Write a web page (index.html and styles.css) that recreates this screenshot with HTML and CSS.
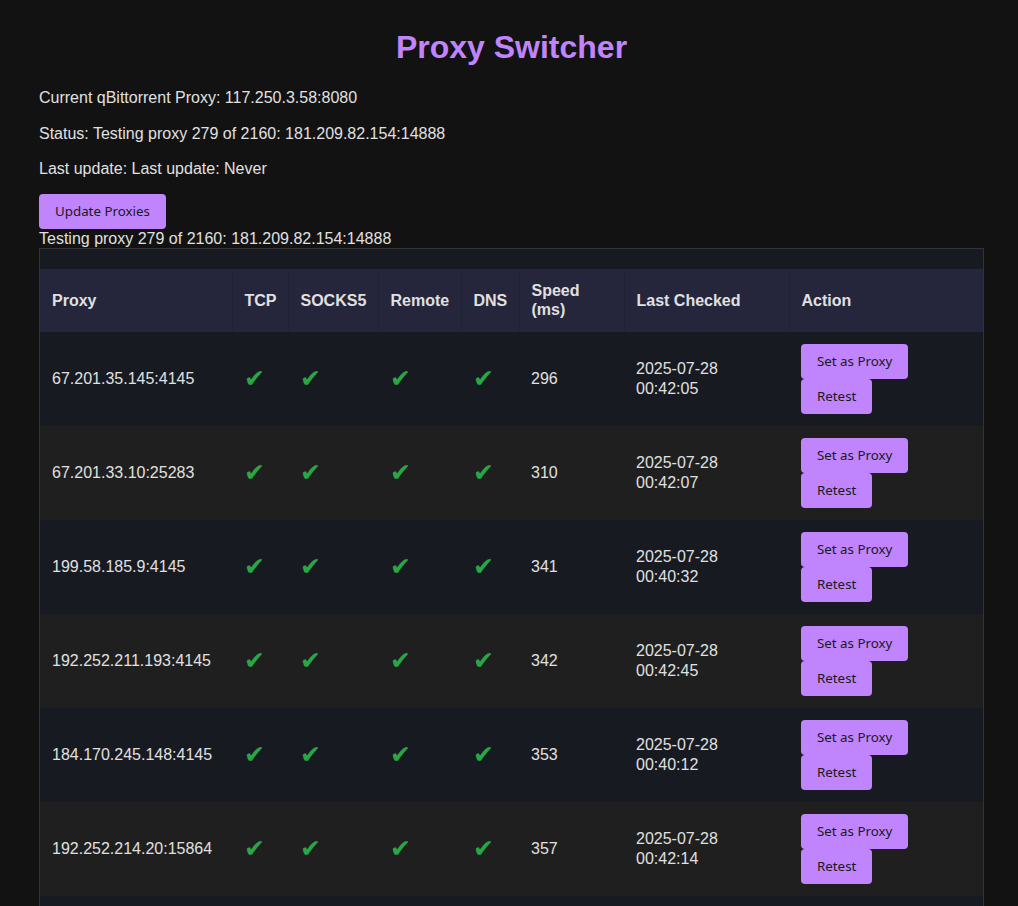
FILE: index.html
```html
<!DOCTYPE html>
<html lang="en">
<head>
<meta charset="utf-8">
<title>Proxy Switcher</title>
<link rel="stylesheet" href="styles.css">
</head>
<body>
<div class="page">
  <h1 class="title">Proxy Switcher</h1>
  <p class="info">Current qBittorrent Proxy: 117.250.3.58:8080</p>
  <p class="info">Status: Testing proxy 279 of 2160: 181.209.82.154:14888</p>
  <p class="info">Last update: Last update: Never</p>
  <button class="btn">Update Proxies</button>
  <div class="progress">Testing proxy 279 of 2160: 181.209.82.154:14888</div>
  <div class="table-wrap">
    <table class="proxies">
      <colgroup>
        <col class="c-proxy"><col class="c-tcp"><col class="c-socks"><col class="c-remote"><col class="c-dns"><col class="c-speed"><col class="c-checked"><col class="c-action">
      </colgroup>
      <thead>
        <tr><th>Proxy</th><th>TCP</th><th>SOCKS5</th><th>Remote</th><th>DNS</th><th>Speed (ms)</th><th>Last Checked</th><th>Action</th></tr>
      </thead>
      <tbody>
        <tr><td>67.201.35.145:4145</td><td class="ok">✔</td><td class="ok">✔</td><td class="ok">✔</td><td class="ok">✔</td><td>296</td><td>2025-07-28 00:42:05</td><td><div class="actions"><button class="btn">Set as Proxy</button><button class="btn">Retest</button></div></td></tr>
        <tr><td>67.201.33.10:25283</td><td class="ok">✔</td><td class="ok">✔</td><td class="ok">✔</td><td class="ok">✔</td><td>310</td><td>2025-07-28 00:42:07</td><td><div class="actions"><button class="btn">Set as Proxy</button><button class="btn">Retest</button></div></td></tr>
        <tr><td>199.58.185.9:4145</td><td class="ok">✔</td><td class="ok">✔</td><td class="ok">✔</td><td class="ok">✔</td><td>341</td><td>2025-07-28 00:40:32</td><td><div class="actions"><button class="btn">Set as Proxy</button><button class="btn">Retest</button></div></td></tr>
        <tr><td>192.252.211.193:4145</td><td class="ok">✔</td><td class="ok">✔</td><td class="ok">✔</td><td class="ok">✔</td><td>342</td><td>2025-07-28 00:42:45</td><td><div class="actions"><button class="btn">Set as Proxy</button><button class="btn">Retest</button></div></td></tr>
        <tr><td>184.170.245.148:4145</td><td class="ok">✔</td><td class="ok">✔</td><td class="ok">✔</td><td class="ok">✔</td><td>353</td><td>2025-07-28 00:40:12</td><td><div class="actions"><button class="btn">Set as Proxy</button><button class="btn">Retest</button></div></td></tr>
        <tr><td>192.252.214.20:15864</td><td class="ok">✔</td><td class="ok">✔</td><td class="ok">✔</td><td class="ok">✔</td><td>357</td><td>2025-07-28 00:42:14</td><td><div class="actions"><button class="btn">Set as Proxy</button><button class="btn">Retest</button></div></td></tr>
        <tr><td>72.195.34.59:4145</td><td class="ok">✔</td><td class="ok">✔</td><td class="ok">✔</td><td class="ok">✔</td><td>362</td><td>2025-07-28 00:41:58</td><td><div class="actions"><button class="btn">Set as Proxy</button><button class="btn">Retest</button></div></td></tr>
      </tbody>
    </table>
  </div>
</div>
</body>
</html>
```

FILE: styles.css
```css
html, body {
  background: #121212;
}
body {
  margin: 8px 0 0 0;
  color: #e0e0e0;
  font-family: "Liberation Sans", Arial, sans-serif;
  font-size: 16px;
  line-height: 1.2;
}
.page {
  padding: 0 34px 0 39px;
}
.title {
  text-align: center;
  color: #c084fc;
  font-size: 32px;
  font-weight: bold;
  line-height: 37px;
  margin: 21.44px 0 22px;
}
.info {
  margin: 16px 0;
}
.info:first-of-type {
  margin-top: 22px;
}
.btn {
  font-family: "Noto Sans", "Open Sans", sans-serif;
  font-size: 13.333px;
  line-height: 19px;
  background: #c084fc;
  color: #1a1a1a;
  border: none;
  border-radius: 4px;
  padding: 8px 16px;
  cursor: pointer;
  display: block;
}
.page > .btn {
  margin-top: 15px;
}
.progress {
  margin: 0;
}
.table-wrap {
  border: 1px solid #333;
  background: #181a22;
  padding-top: 20px;
}
.proxies {
  width: 100%;
  border-collapse: collapse;
  table-layout: fixed;
}
.c-proxy { width: 192px; }
.c-tcp { width: 56px; }
.c-socks { width: 90px; }
.c-remote { width: 83px; }
.c-dns { width: 58px; }
.c-speed { width: 105px; }
.c-checked { width: 165px; }
.c-action { width: 194px; }
.proxies th {
  background: #25253b;
  text-align: left;
  font-weight: bold;
  padding: 12px;
  border-left: 1px solid #222236;
}
.proxies th:first-child {
  border-left: none;
}
.proxies td {
  padding: 12px;
  vertical-align: middle;
}
.proxies tbody tr:nth-child(odd) {
  background: #181a22;
}
.proxies tbody tr:nth-child(even) {
  background: #1f1f1f;
}
.ok {
  color: #28a745;
  font-family: "DejaVu Sans", sans-serif;
  font-size: 25px;
  line-height: 1;
}
.actions {
  display: flex;
  flex-direction: column;
  align-items: flex-start;
}
```
